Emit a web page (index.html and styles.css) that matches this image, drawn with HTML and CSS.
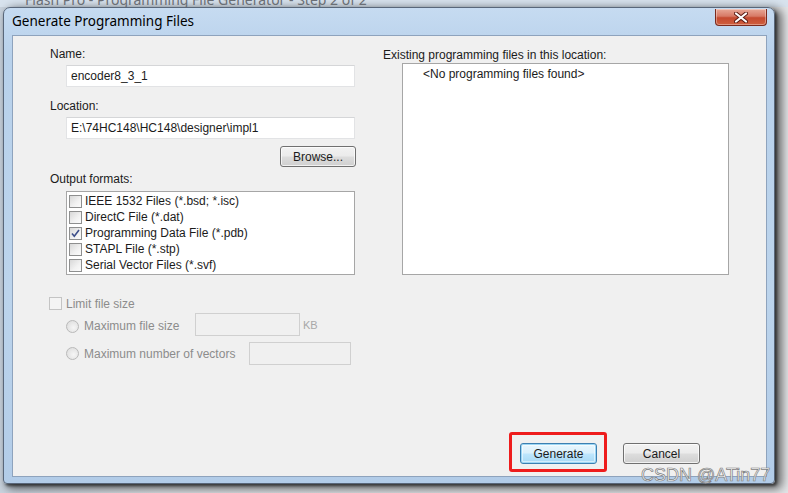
FILE: index.html
```html
<!DOCTYPE html>
<html lang="en">
<head>
    <meta charset="UTF-8">
    <meta name="viewport" content="width=device-width, initial-scale=1.0">
    <title>Generate Programming Files</title>
    <link rel="stylesheet" href="styles.css">
</head>
<body>
    <!-- Parent window peeking out behind the dialog -->
    <div class="parent-title">
        <span class="parent-title-text">Flash Pro - Programming File Generator - Step 2 of 2</span>
    </div>

    <div class="window">
        <!-- Title Bar -->
        <div class="titlebar">
            <span class="title">Generate Programming Files</span>
            <button class="close-btn" aria-label="Close">
                <svg width="14" height="11" viewBox="0 0 14 11">
                    <path d="M2 1.5 L12 9.5 M12 1.5 L2 9.5" stroke="#5a1a12" stroke-width="4" stroke-linecap="round"/>
                    <path d="M2 1.5 L12 9.5 M12 1.5 L2 9.5" stroke="#ffffff" stroke-width="2.2" stroke-linecap="round"/>
                </svg>
            </button>
        </div>

        <!-- Client Area -->
        <div class="client">
            <div class="columns">
                <div class="col-left">
                    <div class="field-label">Name:</div>
                    <div class="text-input">encoder8_3_1</div>

                    <div class="field-label spaced">Location:</div>
                    <div class="text-input">E:\74HC148\HC148\designer\impl1</div>

                    <button class="btn btn-browse">Browse...</button>

                    <div class="field-label output-label">Output formats:</div>
                    <div class="listbox format-list">
                        <div class="list-row"><span class="checkbox"></span>IEEE 1532 Files (*.bsd; *.isc)</div>
                        <div class="list-row"><span class="checkbox"></span>DirectC File (*.dat)</div>
                        <div class="list-row">
                            <span class="checkbox">
                                <svg width="11" height="11" viewBox="0 0 11 11">
                                    <path d="M2 5.5 L4.3 8.3 L9 2" fill="none" stroke="#3d4f8a" stroke-width="1.6"/>
                                </svg>
                            </span>Programming Data File (*.pdb)
                        </div>
                        <div class="list-row"><span class="checkbox"></span>STAPL File (*.stp)</div>
                        <div class="list-row"><span class="checkbox"></span>Serial Vector Files (*.svf)</div>
                    </div>

                    <!-- Disabled size limit options -->
                    <div class="limit-row">
                        <span class="checkbox disabled"></span>
                        <span class="disabled-text">Limit file size</span>
                    </div>
                    <div class="radio-row">
                        <span class="radio"></span>
                        <span class="disabled-text radio-label-short">Maximum file size</span>
                        <span class="text-input small-input size-input"></span>
                        <span class="unit">KB</span>
                    </div>
                    <div class="radio-row second">
                        <span class="radio"></span>
                        <span class="disabled-text radio-label-long">Maximum number of vectors</span>
                        <span class="text-input small-input vector-input"></span>
                    </div>
                </div>

                <div class="col-right">
                    <div class="field-label right-label">Existing programming files in this location:</div>
                    <div class="listbox existing-list">
                        <div class="empty-text">&lt;No programming files found&gt;</div>
                    </div>
                </div>
            </div>

            <!-- Dialog Buttons -->
            <div class="footer">
                <span class="highlight">
                    <button class="btn btn-default">Generate</button>
                </span>
                <button class="btn">Cancel</button>
            </div>
        </div>
    </div>

    <div class="watermark">CSDN @ATin77</div>
</body>
</html>
```

FILE: styles.css
```css
* {
    margin: 0;
    padding: 0;
    box-sizing: border-box;
}

body {
    width: 788px;
    height: 493px;
    overflow: hidden;
    position: relative;
    background: linear-gradient(90deg, #c9d3de 0%, #dfe3e7 20%, #e2e4e6 100%);
    font-family: "Liberation Sans", Arial, sans-serif;
    font-size: 12px;
    color: #1b1b1b;
}

/* Parent window behind */
.parent-title {
    height: 7px;
    overflow: hidden;
    padding-left: 25px;
    background: #d8e3ee;
}

.parent-title-text {
    display: block;
    margin-top: -8px;
    font-family: "Noto Sans", sans-serif;
    font-size: 14px;
    line-height: 16px;
    color: #6a6e75;
    white-space: nowrap;
}

/* Dialog Window */
.window {
    margin-left: 3px;
    width: 772px;
    height: 477px;
    display: flex;
    flex-direction: column;
    border: 1px solid #59677a;
    border-radius: 7px 7px 4px 4px;
    background: linear-gradient(180deg, #c6dbf1 0%, #b8d1eb 10%, #bcd4ec 60%, #b2cce8 100%);
    box-shadow: 2px 2px 3px rgba(0, 0, 0, 0.55), 5px 3px 10px 2px rgba(0, 0, 0, 0.55);
}

.titlebar {
    height: 27px;
    display: flex;
    align-items: flex-start;
    flex-shrink: 0;
}

.title {
    padding-left: 8px;
    font-family: "Noto Sans", sans-serif;
    font-size: 13.5px;
    line-height: 26px;
    color: #000;
}

.close-btn {
    margin-left: auto;
    margin-right: 7px;
    margin-top: 1px;
    width: 52px;
    height: 17px;
    border: 1px solid #7b2a1d;
    border-top: none;
    border-radius: 0 0 4px 4px;
    background: linear-gradient(180deg, #e8a897 0%, #d77a66 45%, #c54a30 55%, #cf5f3e 100%);
    box-shadow: inset 0 0 0 1px rgba(255, 255, 255, 0.35);
    display: flex;
    align-items: center;
    justify-content: center;
}

.client {
    flex: 1;
    margin: 0 7px 6px 8px;
    background-color: #f0f0f0;
    border: 1px solid #8ea3bd;
    padding: 11px 37px 0;
    display: flex;
    flex-direction: column;
}

.columns {
    display: grid;
    grid-template-columns: 306px 346px;
    column-gap: 27px;
}

.col-left, .col-right {
    display: flex;
    flex-direction: column;
}

/* Labels and inputs */
.field-label {
    height: 14px;
    line-height: 14px;
    white-space: nowrap;
}

.field-label.spaced {
    margin-top: 12px;
}

.field-label.output-label {
    margin-top: 5px;
}

.field-label.right-label {
    margin-top: 1px;
}

.text-input {
    margin: 4px 0 0 16px;
    width: 289px;
    height: 22px;
    padding-left: 4px;
    line-height: 20px;
    background: #ffffff;
    border: 1px solid #e2e3e5;
    border-top-color: #d5d6d8;
    white-space: nowrap;
}

/* Buttons */
.btn {
    width: 77px;
    height: 21px;
    font-family: "Liberation Sans", Arial, sans-serif;
    font-size: 12px;
    color: #1b1b1b;
    border: 1px solid #707070;
    border-radius: 3px;
    background: linear-gradient(180deg, #f2f2f2 0%, #ebebeb 48%, #dddddd 52%, #cfcfcf 100%);
    box-shadow: inset 0 0 0 1px rgba(255, 255, 255, 0.7);
}

.btn-browse {
    align-self: flex-end;
    width: 76px;
    margin-top: 7px;
}

.btn-default {
    border-color: #3c7fb1;
    background: linear-gradient(180deg, #eaf6fd 0%, #d9f0fc 48%, #bee6fd 52%, #a7d9f5 100%);
    box-shadow: inset 0 0 0 1px #9cd6f4, inset 0 0 0 2px rgba(255, 255, 255, 0.5);
}

/* List boxes */
.listbox {
    background: #ffffff;
    border: 1px solid #a6a6a6;
}

.format-list {
    margin: 5px 0 0 16px;
    width: 289px;
    height: 84px;
    padding-top: 1px;
}

.list-row {
    height: 16px;
    display: flex;
    align-items: center;
    padding-left: 2px;
    white-space: nowrap;
}

.checkbox {
    width: 13px;
    height: 13px;
    margin-right: 3px;
    flex-shrink: 0;
    border: 1px solid #8e8f8f;
    background: linear-gradient(135deg, #d8d8d8 0%, #f2f2f2 60%, #fbfbfb 100%);
    display: flex;
    align-items: center;
    justify-content: center;
}

.checkbox.disabled {
    margin-left: -1px;
    margin-right: 4px;
    border-color: #c4c4c4;
    background: #f4f4f4;
}

.existing-list {
    margin: 1px 0 0 19px;
    width: 327px;
    height: 212px;
    padding: 3px 0 0 20px;
}

.empty-text {
    line-height: 14px;
}

/* Limit file size block */
.limit-row {
    margin-top: 22px;
    height: 13px;
    display: flex;
    align-items: center;
}

.disabled-text {
    color: #8c8c8c;
    white-space: nowrap;
}

.radio-row {
    margin-top: 3px;
    height: 23px;
    padding-left: 16px;
    display: flex;
    align-items: center;
}

.radio-row.second {
    margin-top: 6px;
}

.radio {
    width: 13px;
    height: 13px;
    margin: 3px 5px 0 0;
    border-radius: 50%;
    border: 1px solid #b9b9b9;
    background: radial-gradient(circle at 60% 60%, #f6f6f6 0%, #e2e2e2 70%, #d4d4d4 100%);
    flex-shrink: 0;
}

.radio-row.second .radio,
.radio-row.second .radio-label-long {
    margin-top: 0;
}

.radio-label-short {
    width: 111px;
    margin-top: 3px;
}

.radio-label-long {
    width: 165px;
}

.small-input {
    margin: 0;
    height: 23px;
    border-color: #d0d0d0;
    background: #f0f0f0;
}

.size-input {
    width: 105px;
}

.vector-input {
    width: 102px;
}

.unit {
    margin-left: 3px;
    font-size: 11px;
    color: #a8a8a8;
}

/* Footer buttons */
.footer {
    margin-top: auto;
    padding: 0 29px 12px 0;
    display: flex;
    justify-content: flex-end;
    gap: 26px;
}

/* Red annotation box drawn over the Generate button */
.highlight {
    position: relative;
    display: flex;
}

.highlight::after {
    content: "";
    position: absolute;
    top: -11px;
    left: -11px;
    right: -10px;
    bottom: -8px;
    border: 3px solid #ee1c1c;
    border-radius: 3px;
}

/* Watermark */
.watermark {
    position: absolute;
    left: 641px;
    top: 465px;
    font-family: "Liberation Sans", Arial, sans-serif;
    font-size: 18px;
    color: rgba(255, 255, 255, 0.9);
    -webkit-text-stroke: 0.7px #7c7c7c;
    white-space: nowrap;
}
```
